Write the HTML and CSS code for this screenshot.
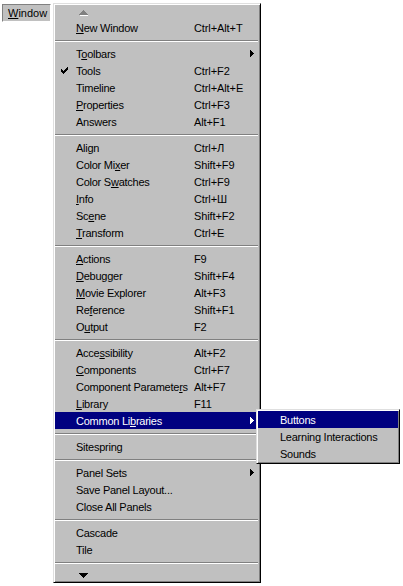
FILE: index.html
```html
<!DOCTYPE html>
<html>
<head>
<meta charset="utf-8">
<link rel="stylesheet" href="styles.css">
</head>
<body>
<div class="screen">
  <div class="menubtn"><u>W</u>indow</div>
  <div class="menu">
    <div class="scroll up">
      <svg width="9" height="6" viewBox="0 0 9 6" shape-rendering="crispEdges">
        <g fill="#fff"><rect x="1" y="5" width="9" height="1"/></g>
        <g fill="#808080"><rect x="4" y="0" width="1" height="1"/><rect x="3" y="1" width="3" height="1"/><rect x="2" y="2" width="5" height="1"/><rect x="1" y="3" width="7" height="1"/><rect x="0" y="4" width="9" height="1"/></g>
      </svg>
    </div>
    <div class="item"><span class="chk"></span><span class="lbl"><u>N</u>ew Window</span><span class="key">Ctrl+Alt+T</span></div>
    <div class="sep"></div>
    <div class="item"><span class="chk"></span><span class="lbl">T<u>o</u>olbars</span><span class="key"></span><span class="arr"><svg width="4" height="7" viewBox="0 0 4 7" shape-rendering="crispEdges"><path d="M0 0h1v7H0zM1 1h1v5H1zM2 2h1v3H2zM3 3h1v1H3z" fill="#000"/></svg></span></div>
    <div class="item"><span class="chk"><svg width="7" height="7" viewBox="0 0 7 7" shape-rendering="crispEdges"><path d="M6 0h1v1H6zM5 1h2v1H5zM0 2h1v1H0zM4 2h3v1H4zM0 3h2v1H0zM3 3h3v1H3zM0 4h5v1H0zM1 5h3v1H1zM2 6h1v1H2z" fill="#000"/></svg></span><span class="lbl">Tools</span><span class="key">Ctrl+F2</span></div>
    <div class="item"><span class="chk"></span><span class="lbl">Timeline</span><span class="key">Ctrl+Alt+E</span></div>
    <div class="item"><span class="chk"></span><span class="lbl"><u>P</u>roperties</span><span class="key">Ctrl+F3</span></div>
    <div class="item"><span class="chk"></span><span class="lbl">Answers</span><span class="key">Alt+F1</span></div>
    <div class="sep"></div>
    <div class="item"><span class="chk"></span><span class="lbl">Align</span><span class="key">Ctrl+Л</span></div>
    <div class="item"><span class="chk"></span><span class="lbl">Color Mi<u>x</u>er</span><span class="key">Shift+F9</span></div>
    <div class="item"><span class="chk"></span><span class="lbl">Color S<u>w</u>atches</span><span class="key">Ctrl+F9</span></div>
    <div class="item"><span class="chk"></span><span class="lbl"><u>I</u>nfo</span><span class="key">Ctrl+Ш</span></div>
    <div class="item"><span class="chk"></span><span class="lbl">Sc<u>e</u>ne</span><span class="key">Shift+F2</span></div>
    <div class="item"><span class="chk"></span><span class="lbl"><u>T</u>ransform</span><span class="key">Ctrl+E</span></div>
    <div class="sep"></div>
    <div class="item"><span class="chk"></span><span class="lbl"><u>A</u>ctions</span><span class="key">F9</span></div>
    <div class="item"><span class="chk"></span><span class="lbl"><u>D</u>ebugger</span><span class="key">Shift+F4</span></div>
    <div class="item"><span class="chk"></span><span class="lbl"><u>M</u>ovie Explorer</span><span class="key">Alt+F3</span></div>
    <div class="item"><span class="chk"></span><span class="lbl">Re<u>f</u>erence</span><span class="key">Shift+F1</span></div>
    <div class="item"><span class="chk"></span><span class="lbl">O<u>u</u>tput</span><span class="key">F2</span></div>
    <div class="sep"></div>
    <div class="item"><span class="chk"></span><span class="lbl">Acce<u>s</u>sibility</span><span class="key">Alt+F2</span></div>
    <div class="item"><span class="chk"></span><span class="lbl"><u>C</u>omponents</span><span class="key">Ctrl+F7</span></div>
    <div class="item"><span class="chk"></span><span class="lbl">Component Paramete<u>r</u>s</span><span class="key">Alt+F7</span></div>
    <div class="item"><span class="chk"></span><span class="lbl"><u>L</u>ibrary</span><span class="key">F11</span></div>
    <div class="item hl has-sub"><span class="chk"></span><span class="lbl">Common Li<u>b</u>raries</span><span class="key"></span><span class="arr"><svg width="4" height="7" viewBox="0 0 4 7" shape-rendering="crispEdges"><path d="M0 0h1v7H0zM1 1h1v5H1zM2 2h1v3H2zM3 3h1v1H3z" fill="#fff"/></svg></span>
      <div class="submenu">
        <div class="item hl"><span class="chk"></span><span class="lbl">Buttons</span></div>
        <div class="item"><span class="chk"></span><span class="lbl">Learning Interactions</span></div>
        <div class="item"><span class="chk"></span><span class="lbl">Sounds</span></div>
      </div>
    </div>
    <div class="sep"></div>
    <div class="item"><span class="chk"></span><span class="lbl">Sitespring</span><span class="key"></span></div>
    <div class="sep"></div>
    <div class="item"><span class="chk"></span><span class="lbl">Panel Sets</span><span class="key"></span><span class="arr"><svg width="4" height="7" viewBox="0 0 4 7" shape-rendering="crispEdges"><path d="M0 0h1v7H0zM1 1h1v5H1zM2 2h1v3H2zM3 3h1v1H3z" fill="#000"/></svg></span></div>
    <div class="item"><span class="chk"></span><span class="lbl">Save Panel Layout...</span><span class="key"></span></div>
    <div class="item"><span class="chk"></span><span class="lbl">Close All Panels</span><span class="key"></span></div>
    <div class="sep"></div>
    <div class="item"><span class="chk"></span><span class="lbl">Cascade</span><span class="key"></span></div>
    <div class="item"><span class="chk"></span><span class="lbl">Tile</span><span class="key"></span></div>
    <div class="sep"></div>
    <div class="scroll down">
      <svg width="9" height="5" viewBox="0 0 9 5" shape-rendering="crispEdges">
        <path d="M0 0h9v1H0zM1 1h7v1H1zM2 2h5v1H2zM3 3h3v1H3zM4 4h1v1H4z" fill="#000"/>
      </svg>
    </div>
  </div>
</div>
</body>
</html>
```
FILE: styles.css
```css
html, body {
  margin: 0;
  padding: 0;
  background: #fff;
}
body {
  font-family: "Liberation Sans", Arial, sans-serif;
  font-size: 11px;
  color: #000;
}
.screen {
  display: flex;
  align-items: flex-start;
  padding: 3px 0 0 2px;
}
.menubtn {
  margin-top: 1px;
  width: 42px;
  height: 16px;
  line-height: 16px;
  padding-left: 5px;
  background: #c0c0c0;
  border: 1px solid;
  border-color: #808080 #fff #fff #808080;
}
.menubtn u, .item u { text-decoration: underline; text-underline-offset: 1px; }
.menu {
  margin-left: 2px;
  width: 204px;
  padding: 1px;
  background: #c0c0c0;
  border: 1px solid;
  border-color: #dfdfdf #000 #000 #dfdfdf;
  box-shadow: inset 1px 1px #fff, inset -1px -1px #808080;
  display: flex;
  flex-direction: column;
}
.scroll {
  height: 14px;
  display: flex;
  padding-left: 24px;
}
.scroll.up { align-items: flex-start; padding-top: 5px; height: 9px; }
.scroll.down { align-items: flex-start; padding-top: 6px; height: 8px; }
.scroll svg { display: block; }
.item {
  height: 17px;
  display: flex;
  align-items: center;
  white-space: nowrap;
}
.item.hl {
  background: #000080;
  color: #fff;
}
.chk {
  width: 21px;
  flex: none;
  display: flex;
  padding-left: 6px;
  box-sizing: border-box;
}
.chk svg { display: block; }
.lbl {
  width: 118px;
  flex: none;
  letter-spacing: -0.25px;
}
.key {
  flex: 1;
  letter-spacing: -0.1px;
}
.arr {
  width: 4px;
  margin-right: 5px;
  display: flex;
}
.arr svg { display: block; }
.sep {
  height: 0;
  margin: 4px 1px 3px 0;
  border-top: 1px solid #808080;
  border-bottom: 1px solid #fff;
}
.has-sub { position: relative; }
.submenu {
  position: absolute;
  left: 201px;
  top: -3px;
  width: 140px;
  padding: 1px;
  background: #c0c0c0;
  color: #000;
  border: 1px solid;
  border-color: #dfdfdf #000 #000 #dfdfdf;
  box-shadow: inset 1px 1px #fff, inset -1px -1px #808080;
  display: flex;
  flex-direction: column;
  z-index: 2;
}
.submenu .item.hl { color: #fff; }
.submenu .chk { width: 22px; }
.submenu .lbl { width: auto; }
```
